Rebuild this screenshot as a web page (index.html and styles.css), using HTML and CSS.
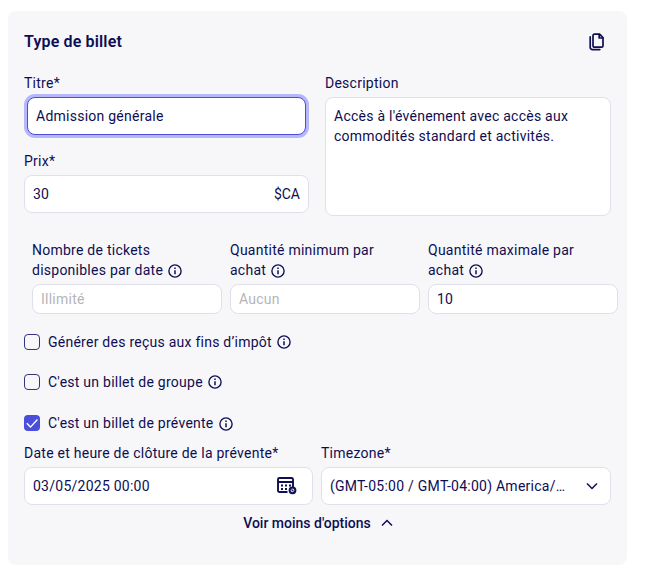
FILE: index.html
```html
<!DOCTYPE html>
<html lang="fr">
<head>
<meta charset="utf-8">
<title>Type de billet</title>
<link rel="stylesheet" href="styles.css">
</head>
<body>
<svg width="0" height="0" class="defs" aria-hidden="true">
  <symbol id="info" viewBox="0 0 14 14">
    <circle cx="7" cy="7" r="6.1" fill="none" stroke="currentColor" stroke-width="1.35"/>
    <path d="M7 6.2v4" stroke="currentColor" stroke-width="1.5"/>
    <path d="M7 3.6v1.5" stroke="currentColor" stroke-width="1.5"/>
  </symbol>
</svg>
<main class="card">
  <header class="card-header">
    <h1>Type de billet</h1>
    <svg class="copy" viewBox="0 0 16 18" fill="none" stroke="currentColor" stroke-width="1.7" stroke-linejoin="round" stroke-linecap="round">
      <path d="M5.4 1.2h5.2l3.4 3.4v8.2a1.4 1.4 0 0 1-1.4 1.4H5.4a1.4 1.4 0 0 1-1.4-1.4V2.6a1.4 1.4 0 0 1 1.4-1.4z"/>
      <path d="M10.2 1.5v3.5h3.5"/>
      <path d="M1.2 3.9v10.5a2.2 2.2 0 0 0 2.2 2.2h7.4"/>
    </svg>
  </header>

  <section class="main-grid">
    <div class="stack">
      <label class="field">
        <span class="label">Titre*</span>
        <input class="control focused" value="Admission générale">
      </label>
      <label class="field">
        <span class="label">Prix*</span>
        <span class="control split"><span>30</span><span class="currency">$CA</span></span>
      </label>
    </div>
    <label class="field">
      <span class="label">Description</span>
      <textarea class="control area">Accès à l'événement avec accès aux commodités standard et activités.</textarea>
    </label>
  </section>

  <section class="limits">
    <label class="field">
      <span class="label">Nombre de tickets disponibles par date <svg class="info"><use href="#info"/></svg></span>
      <input class="control small" placeholder="Illimité">
    </label>
    <label class="field">
      <span class="label">Quantité minimum par achat <svg class="info"><use href="#info"/></svg></span>
      <input class="control small" placeholder="Aucun">
    </label>
    <label class="field">
      <span class="label">Quantité maximale par achat <svg class="info"><use href="#info"/></svg></span>
      <input class="control small" value="10">
    </label>
  </section>

  <section class="checks">
    <label class="check"><span class="box"></span><span>Générer des reçus aux fins d’impôt <svg class="info"><use href="#info"/></svg></span></label>
    <label class="check"><span class="box"></span><span>C'est un billet de groupe <svg class="info"><use href="#info"/></svg></span></label>
    <label class="check presale"><span class="box checked"><svg viewBox="0 0 16 16"><path d="M2.8 8.3l3.7 3.8 6.9-7.6" fill="none" stroke="#fff" stroke-width="1.4"/></svg></span><span>C'est un billet de prévente <svg class="info"><use href="#info"/></svg></span></label>
  </section>

  <section class="closing">
    <div class="field">
      <span class="label">Date et heure de clôture de la prévente*</span>
      <span class="control split date"><span>03/05/2025 00:00</span>
        <svg class="calendar" viewBox="0 0 20 18">
          <path d="M2.5 1h12A1.5 1.5 0 0 1 16 2.5v7.5M10.500 15h-8A1.500 1.500 0 0 1 1 13.500V2.500A1.500 1.500 0 0 1 2.500 1" fill="none" stroke="currentColor" stroke-width="1.900"/>
          <path d="M1 5h15" stroke="currentColor" stroke-width="2"/>
          <path d="M4 8.500h2M8 8.500h2M12 8.500h2M4 12h2M8 12h2" stroke="currentColor" stroke-width="2"/>
          <circle cx="15.500" cy="13.300" r="2.900" fill="#dcdce8" stroke="currentColor" stroke-width="2"/>
          <path d="M14.500 12.300l2 2" stroke="currentColor" stroke-width="1.100"/>
        </svg>
      </span>
    </div>
    <div class="field">
      <span class="label">Timezone*</span>
      <span class="control split zone"><span class="zone-text">(GMT-05:00 / GMT-04:00) America/…</span>
        <svg class="chevron" viewBox="0 0 12 8"><path d="M1 1.500l5 5 5-5"/></svg>
      </span>
    </div>
  </section>

  <button class="toggle" type="button">Voir moins d'options <svg class="chevron" viewBox="0 0 12 8"><path d="M1 6.500l5-5 5 5"/></svg></button>
</main>
</body>
</html>
```
FILE: styles.css
```css
* { box-sizing: border-box; }
body {
  margin: 0;
  padding: 11px 19px 0 8px;
  background: #fff;
  color: #0e0e52;
  font: 400 14px/20px Roboto, sans-serif;
  letter-spacing: 0.25px;
}
svg { display: block; flex: none; }
.defs { position: absolute; }
.card {
  height: 554px;
  padding: 20px 16px;
  border-radius: 8px;
  background: #f7f7f9;
  display: flex;
  flex-direction: column;
}
.card-header {
  display: flex;
  justify-content: space-between;
  align-items: center;
  height: 22px;
  padding-right: 6px;
  margin-bottom: 20px;
}
h1 { margin: 0; font-size: 16px; font-weight: 600; line-height: 22px; letter-spacing: 0.15px; }
.copy { width: 16px; height: 18px; }
.main-grid { display: grid; grid-template-columns: 285px 286px; gap: 16px; }
.stack { display: flex; flex-direction: column; gap: 16px; }
.field { display: flex; flex-direction: column; gap: 4px; min-width: 0; }
.label { display: block; }
.control {
  display: block;
  width: 100%;
  height: 38px;
  margin: 0;
  padding: 0 8px;
  border: 1px solid #e0dfec;
  border-radius: 8px;
  background: #fff;
  color: inherit;
  font: inherit;
  letter-spacing: inherit;
  outline: none;
}
.control::placeholder { color: #b5b5b8; opacity: 1; }
.focused { width: 279px; margin: 0 3px; border-color: #4b4ddb; box-shadow: 0 0 0 3px #b6b7fa; }
.area { height: 119px; padding: 8px; resize: none; overflow: hidden; }
.split { display: flex; align-items: center; justify-content: space-between; }
.currency { letter-spacing: 0; }
.limits { display: grid; grid-template-columns: repeat(3, 190px); gap: 8px; margin: 24px 0 0 8px; }
.limits .label { padding-right: 20px; }
.small { height: 30px; }
.info { display: inline-block; width: 14px; height: 14px; margin-left: 1px; vertical-align: -3px; }
.checks { display: flex; flex-direction: column; gap: 20px; margin-top: 18px; }
.check { display: flex; align-items: center; gap: 8px; }
.check .info { vertical-align: -2px; }
.presale { margin-top: 1px; }
.presale .info { margin-left: 2px; vertical-align: -3px; }
.box { width: 16px; height: 16px; border: 1px solid #34347c; border-radius: 4px; }
.checked { border: 0; background: #4b4ddb; }
.closing { display: grid; grid-template-columns: 289px 290px; gap: 8px; margin-top: 10px; }
.date { padding-right: 15px; }
.calendar { width: 20px; height: 18px; }
.zone { padding-right: 12px; }
.zone-text { white-space: nowrap; }
.chevron { width: 12px; height: 8px; fill: none; stroke: currentColor; stroke-width: 1.5; }
.toggle {
  display: flex;
  align-items: center;
  align-self: center;
  gap: 10px;
  margin-top: 8px;
  padding: 0 0 0 1px;
  border: 0;
  background: none;
  color: inherit;
  font: 500 14px/20px Roboto, sans-serif;
  letter-spacing: 0;
}
```
